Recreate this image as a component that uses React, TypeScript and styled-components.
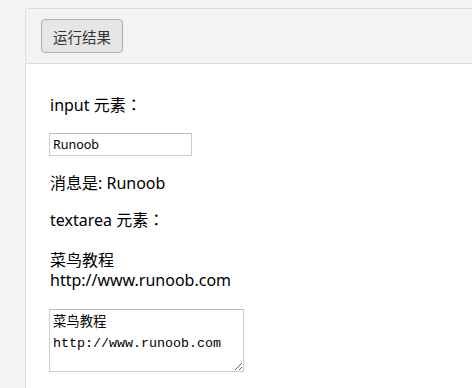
import React, { useState } from 'react';
import styled, { createGlobalStyle } from 'styled-components';

const GlobalStyle = createGlobalStyle`
  html, body {
    margin: 0;
    padding: 0;
    background: #f5f5f5;
    overflow: hidden;
  }
  body {
    font-family: "Noto Sans", "Noto Sans CJK SC", sans-serif;
  }
`;

const Page = styled.div`
  padding: 8px 0 0 25px;
  height: 380px;
`;

const Panel = styled.div`
  margin-right: -10px;
  height: 100%;
  background: #ffffff;
  border: 1px solid #dddddd;
  border-radius: 3px 0 0 0;
`;

const Toolbar = styled.div`
  display: flex;
  align-items: flex-start;
  height: 44px;
  padding: 10px 15px 0;
  background: #f3f3f3;
  border-bottom: 1px solid #dddddd;
`;

const RunButton = styled.button`
  width: 82px;
  height: 34px;
  padding: 0;
  font-family: "Noto Sans CJK SC", sans-serif;
  font-size: 14.5px;
  color: #333333;
  background: #e6e6e6;
  border: 1px solid #adadad;
  border-radius: 4px;
`;

const Content = styled.div`
  display: flex;
  flex-direction: column;
  align-items: flex-start;
  padding: 31px 23px 0;
`;

const Text = styled.p<{ $top?: number }>`
  margin: ${(p) => p.$top ?? 0}px 0 0 1px;
  font-size: 16px;
  line-height: 20px;
  color: #000000;
  white-space: pre-line;
`;

// full-width colon sits centred in the reference, as the TC face draws it
const Colon = styled.span`
  font-family: "Noto Sans CJK TC", sans-serif;
  line-height: 0;
`;

const Field = styled.input`
  box-sizing: border-box;
  width: 143px;
  height: 23px;
  margin-top: 18px;
  padding: 1px 3px;
  font-family: "Noto Sans", sans-serif;
  font-size: 12.5px;
  color: #000000;
  border: 1px solid #cccccc;
  border-top-color: #bbbbbb;
  outline: none;
`;

const Area = styled.textarea`
  box-sizing: border-box;
  width: 195px;
  height: 63px;
  margin-top: 19px;
  padding: 2px 3px;
  font-family: "Liberation Mono", "Noto Sans CJK SC", monospace;
  font-size: 13.33px;
  line-height: 21px;
  color: #000000;
  border: 1px solid #cccccc;
  border-top-color: #bbbbbb;
  outline: none;
`;

export default function App() {
  const [message, setMessage] = useState('Runoob');
  const [message2, setMessage2] = useState('菜鸟教程\nhttp://www.runoob.com');

  return (
    <>
      <GlobalStyle />
      <Page>
        <Panel>
          <Toolbar>
            <RunButton>运行结果</RunButton>
          </Toolbar>
          <Content>
            <Text>
              input 元素<Colon>：</Colon>
            </Text>
            <Field value={message} onChange={(e) => setMessage(e.target.value)} />
            <Text $top={17}>消息是: {message}</Text>
            <Text $top={17}>
              textarea 元素<Colon>：</Colon>
            </Text>
            <Text $top={20}>{message2}</Text>
            <Area value={message2} onChange={(e) => setMessage2(e.target.value)} />
          </Content>
        </Panel>
      </Page>
    </>
  );
}
